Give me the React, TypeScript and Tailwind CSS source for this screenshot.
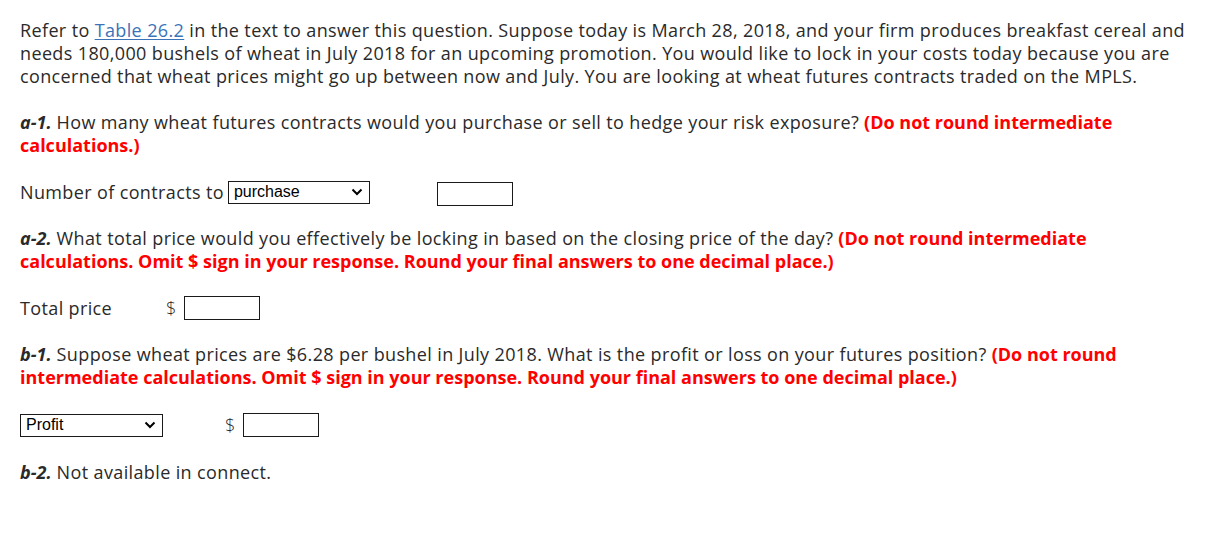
import React from "react";

const RED = "font-bold text-[#f00] tracking-[0px]";

function Chevron() {
  return (
    <svg width="12" height="8" viewBox="0 0 12 8" className="shrink-0">
      <path d="M1.5 1.5 6 6l4.5-4.5" fill="none" stroke="#000" strokeWidth="2" />
    </svg>
  );
}

function FakeSelect({ value, width }: { value: string; width: string }) {
  return (
    <div
      className={`${width} h-[23px] border border-[#1a1a1a] flex items-center justify-between pl-[5px] pr-[6px] bg-white tracking-normal`}
    >
      <span className="font-['Liberation_Sans',Arial,sans-serif] text-[16px] leading-none text-black">
        {value}
      </span>
      <Chevron />
    </div>
  );
}

function Box() {
  return <div className="w-[76px] h-[24px] border border-[#1a1a1a] bg-white" />;
}

export default function App() {
  return (
    <div className="w-[1214px] h-[535px] bg-white pl-[20px] pt-[19px] font-['Open_Sans',sans-serif] text-[18px] leading-[23px] text-[#2a2a2a] tracking-[0.37px]">
      <p className="mb-[23px] whitespace-nowrap">
        Refer to{" "}
        <a className="text-[#3a73b8] underline underline-offset-2">Table 26.2</a>{" "}
        in the text to answer this question. Suppose today is March 28, 2018, and your firm produces breakfast cereal and
        <br />
        needs 180,000 bushels of wheat in July 2018 for an upcoming promotion. You would like to lock in your costs today because you are
        <br />
        concerned that wheat prices might go up between now and July. You are looking at wheat futures contracts traded on the MPLS.
      </p>

      <p className="mb-[23px] whitespace-nowrap">
        <b className="italic tracking-[0px]">a-1.</b> How many wheat futures contracts would you purchase or sell to hedge your risk exposure?{" "}
        <span className={RED}>(Do not round intermediate</span>
        <br />
        <span className={RED}>calculations.)</span>
      </p>

      <div className="flex items-center h-[24px] mb-[23px]">
        <span className="mr-[4px]">Number of contracts to</span>
        <FakeSelect value="purchase" width="w-[142px]" />
        <div className="ml-[67px] pt-[3px]">
          <Box />
        </div>
      </div>

      <p className="mb-[23px] whitespace-nowrap">
        <b className="italic tracking-[0px]">a-2.</b> What total price would you effectively be locking in based on the closing price of the day?{" "}
        <span className={RED}>(Do not round intermediate</span>
        <br />
        <span className={RED}>calculations. Omit $ sign in your response. Round your final answers to one decimal place.)</span>
      </p>

      <div className="flex items-center h-[24px] mb-[23px]">
        <span className="w-[146px]">Total price</span>
        <span className="mr-[7px] font-light">$</span>
        <Box />
      </div>

      <p className="mb-[23px] whitespace-nowrap">
        <b className="italic tracking-[0px]">b-1.</b> Suppose wheat prices are $6.28 per bushel in July 2018. What is the profit or loss on your futures position?{" "}
        <span className={RED}>(Do not round</span>
        <br />
        <span className={RED}>intermediate calculations. Omit $ sign in your response. Round your final answers to one decimal place.)</span>
      </p>

      <div className="flex items-center h-[24px] mb-[25px] pt-[2px]">
        <FakeSelect value="Profit" width="w-[143px]" />
        <span className="ml-[62px] mr-[7px] font-light">$</span>
        <Box />
      </div>

      <p>
        <b className="italic tracking-[0px]">b-2.</b> Not available in connect.
      </p>
    </div>
  );
}
